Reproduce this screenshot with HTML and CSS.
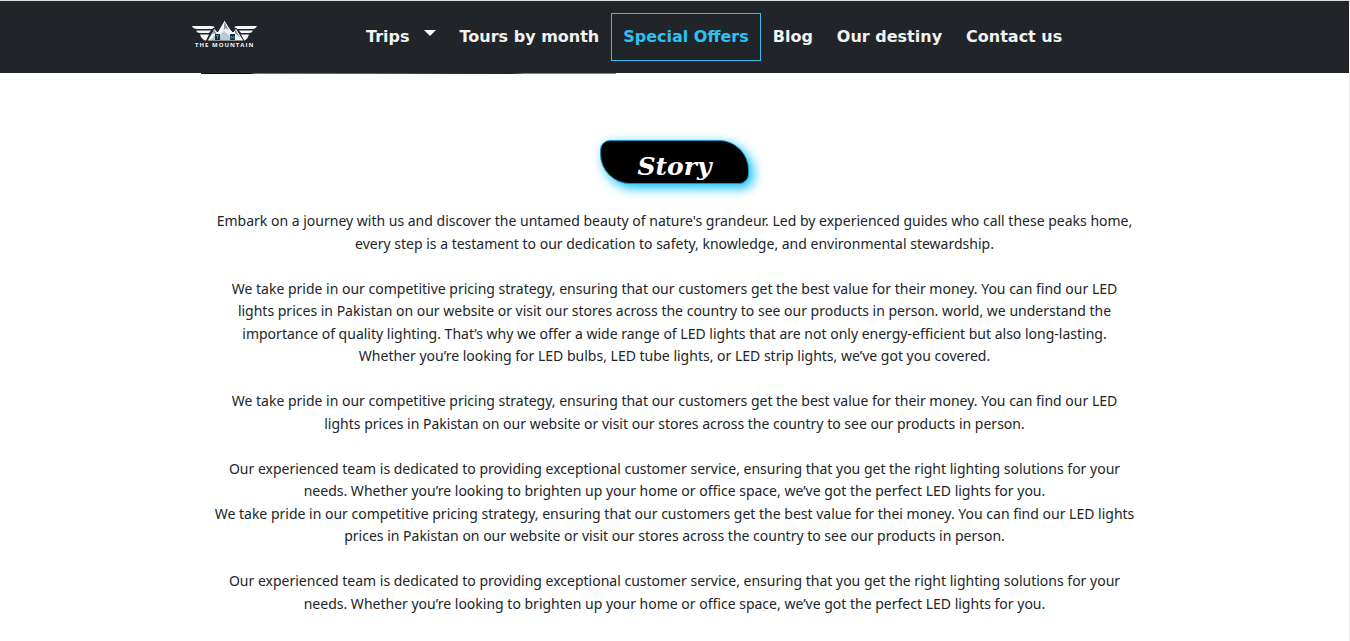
FILE: index.html
```html
<!DOCTYPE html>
<html lang="en">
<head>
<meta charset="utf-8">
<title>The Mountain</title>
<link rel="stylesheet" href="styles.css">
</head>
<body>
<header class="navbar">
  <a class="brand" href="#" aria-label="The Mountain">
    <svg class="logo" viewBox="0 0 68 28">
      <g fill="#f4f6f7">
        <path d="M1 6h20l3 1-3 2H6Q2 9 1 6zM5 10.500h15l-2 2.500h-9q-3 0-4-2.500zM9 14.500h9l-3 6h-1q-4-2-5-6z"/>
        <path d="M66 6H46l-3 1 3 2h15q4 0 5-3zM62 10.500H48l2 2.500h8q3 0 4-2.500zM58 14.500h-8l3 6h1q3-2 4-6z"/>
      </g>
      <path d="M16 21L23.500 8l3 4L33.500 0 40 10l2 2 3-4 8 13z" fill="#f4f6f7" stroke="#212529"/>
      <path d="M23 9l-3 6 3-2 3 2zM33.500 2l4 8-3-2-2 3zM44 9l5 8-5-4z" fill="#82919a"/>
      <path d="M19 20l5-5h5l4-4 6 5v4z" fill="#b9cad3"/>
      <path d="M24 14h5v6h-5zM39 14h5v6h-5z" fill="#10303f"/>
      <path d="M25 15.500h3M26.500 15v4M40 19v-3l1.500 2 1.500-2v3" stroke="#3f8ca8" fill="none"/>
      <text class="logo-text" x="4" y="27" fill="#f4f6f7">THE MOUNTAIN</text>
    </svg>
  </a>
  <nav class="menu">
    <a class="link" href="#">Trips <span class="caret"></span></a>
    <a class="link" href="#">Tours by month</a>
    <a class="link active" href="#">Special Offers</a>
    <a class="link" href="#">Blog</a>
    <a class="link" href="#">Our destiny</a>
    <a class="link" href="#">Contact us</a>
  </nav>
</header>
<main class="content">
  <div class="photo-edge"></div>
  <h1 class="badge">Story</h1>
  <section class="story">
    <p>Embark on a journey with us and discover the untamed beauty of nature's grandeur. Led by experienced guides who call these peaks home,<br>every step is a testament to our dedication to safety, knowledge, and environmental stewardship.</p>
    <p>We take pride in our competitive pricing strategy, ensuring that our customers get the best value for their money. You can find our LED<br>lights prices in Pakistan on our website or visit our stores across the country to see our products in person. world, we understand the<br>importance of quality lighting. That’s why we offer a wide range of LED lights that are not only energy-efficient but also long-lasting.<br>Whether you’re looking for LED bulbs, LED tube lights, or LED strip lights, we’ve got you covered.</p>
    <p>We take pride in our competitive pricing strategy, ensuring that our customers get the best value for their money. You can find our LED<br>lights prices in Pakistan on our website or visit our stores across the country to see our products in person.</p>
    <p>Our experienced team is dedicated to providing exceptional customer service, ensuring that you get the right lighting solutions for your<br>needs. Whether you’re looking to brighten up your home or office space, we’ve got the perfect LED lights for you.<br>We take pride in our competitive pricing strategy, ensuring that our customers get the best value for thei money. You can find our LED lights<br>prices in Pakistan on our website or visit our stores across the country to see our products in person.</p>
    <p>Our experienced team is dedicated to providing exceptional customer service, ensuring that you get the right lighting solutions for your<br>needs. Whether you’re looking to brighten up your home or office space, we’ve got the perfect LED lights for you.</p>
  </section>
</main>
</body>
</html>
```
FILE: styles.css
```css
* { box-sizing: border-box; }
body {
  min-height: 100vh;
  margin: 0;
  border-top: 1px solid #dcdcd8;
  border-right: 1px solid #f0f0f0;
  background: #fff;
  color: #212529;
  font-family: "Noto Sans", "Open Sans", sans-serif;
  font-size: 15px;
  line-height: 1.5em;
}
.navbar {
  display: flex;
  align-items: center;
  height: 72px;
  padding-left: 191px;
  background: #212529;
}
.brand { width: 68px; margin-right: 95px; padding-bottom: 6px; }
.logo { display: block; width: 68px; height: 28px; overflow: visible; }
.logo-text { font: bold 6px "Open Sans", sans-serif; letter-spacing: 1px; }
.menu { display: flex; align-items: center; }
.link {
  display: flex;
  align-items: center;
  height: 48px;
  padding: 0 12px;
  color: #f2f2f2;
  font-family: "DejaVu Sans", sans-serif;
  font-size: 16px;
  font-weight: bold;
  text-decoration: none;
  white-space: nowrap;
}
.active { padding: 0 11px; border: 1px solid #35bdec; color: #2fc1f2; }
.caret {
  margin: 0 0 8px 14px;
  border: 6px solid transparent;
  border-top-color: #fff;
  border-bottom: 0;
}
.content { display: flex; flex-direction: column; align-items: center; }
.photo-edge {
  align-self: flex-start;
  width: 415px;
  height: 1px;
  margin-left: 201px;
  background: linear-gradient(90deg, #08090c 12%, #777880 13%, #5d5f68 40%, #26384c 60%, #16243b 75%, #85848a 78%);
}
.badge {
  margin: 66px 0 0;
  width: 149px;
  height: 44px;
  padding-top: 4px;
  border: 1px solid #1593bb;
  border-radius: 10px 30px 10px 30px;
  background: #000;
  box-shadow: 4px 4px 12px #00bfff;
  color: #fff;
  font: italic bold 25px/44px "DejaVu Serif", serif;
  text-align: center;
}
.story {
  display: grid;
  gap: 1.5em;
  margin-top: 26px;
  text-align: center;
  white-space: nowrap;
}
.story p { margin: 0; font-size: 14px; }
```
